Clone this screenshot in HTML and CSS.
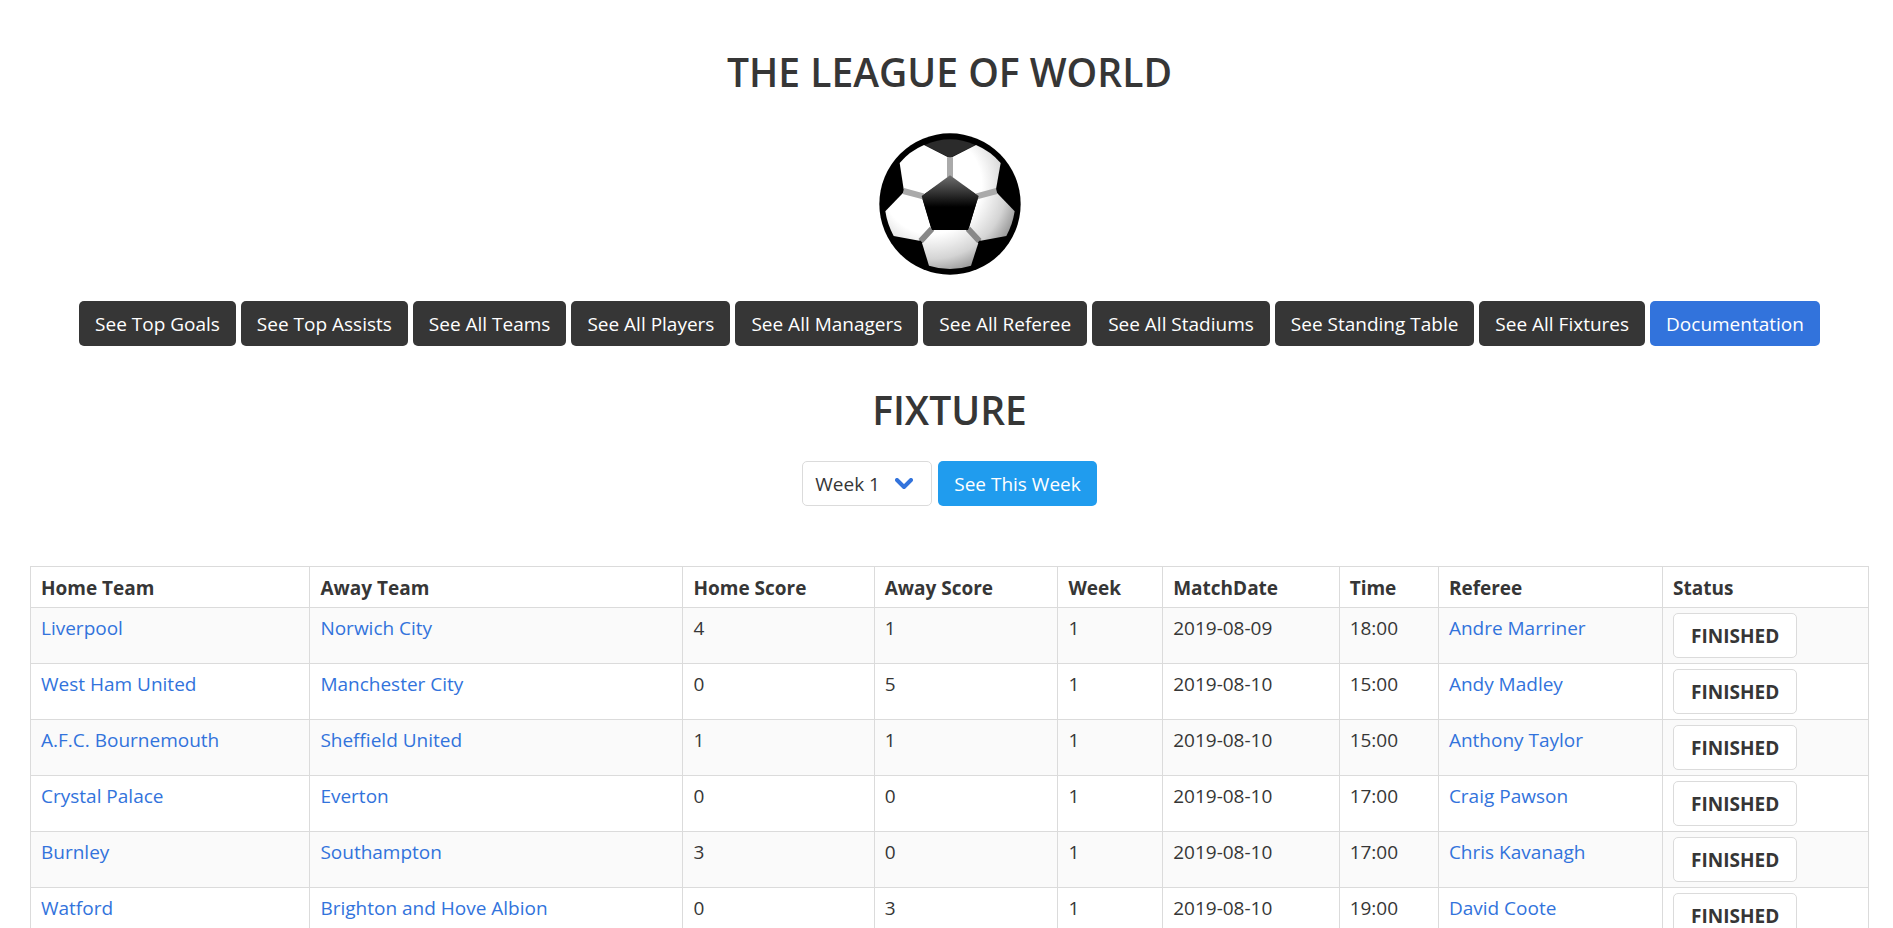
FILE: index.html
```html
<!DOCTYPE html>
<html lang="en">
<head>
<meta charset="utf-8">
<title>The League of World</title>
<link rel="stylesheet" href="styles.css">
</head>
<body>
<header class="header">
  <h1 class="title">THE LEAGUE OF WORLD</h1>
  <svg class="ball" viewBox="57 38 426 424" role="img" aria-label="Football">
    <defs>
      <linearGradient id="core" x1="0" y1="0" x2="0" y2="1"><stop offset="0" stop-color="#707070"/><stop offset="0.58" stop-color="#000"/></linearGradient>
      <radialGradient id="shade" gradientUnits="userSpaceOnUse" cx="215" cy="190" r="300"><stop offset="0.5" stop-color="#fff"/><stop offset="0.75" stop-color="#d4d4d4"/><stop offset="1" stop-color="#777"/></radialGradient>
    </defs>
    <circle cx="270" cy="250" r="212" fill="#000"/>
    <path d="M194 73Q270 38 346 73L270 111Z" fill="#2b2b2b"/>
    <g fill="url(#shade)">
      <path d="M192 73L270 113V168L185 226L131 206L119 127Q149 91 192 73Z"/>
      <path d="M348 73L270 113V168L355 226L408 206L422 127Q391 91 348 73Z"/>
      <path d="M131 215L185 227L214 325L178 360L101 346Q82 311 76 272Z"/>
      <path d="M409 215L355 227L326 325L362 360L439 346Q458 311 464 272Z"/>
      <path d="M221 328H319L355 367L333 435Q270 455 207 435L186 367Z"/>
    </g>
    <g stroke-width="18" fill="none">
      <path d="M270 110V170M130 211L190 227M410 211L350 227" stroke="#aaa"/>
      <path d="M216 324L182 361M324 324L358 361" stroke="#888"/>
    </g>
    <path d="M270 164L356 226L324 328H216L185 226Z" fill="url(#core)"/>
  </svg>
  <nav class="nav">
    <a class="button dark" href="#">See Top Goals</a>
    <a class="button dark" href="#">See Top Assists</a>
    <a class="button dark" href="#">See All Teams</a>
    <a class="button dark" href="#">See All Players</a>
    <a class="button dark" href="#">See All Managers</a>
    <a class="button dark" href="#">See All Referee</a>
    <a class="button dark" href="#">See All Stadiums</a>
    <a class="button dark" href="#">See Standing Table</a>
    <a class="button dark" href="#">See All Fixtures</a>
    <a class="button link" href="#">Documentation</a>
  </nav>
</header>
<main class="main">
  <h2 class="title">FIXTURE</h2>
  <form class="filter">
    <div class="select">
      <select aria-label="Week"><option>Week 1</option><option>Week 2</option><option>Week 3</option></select>
      <svg class="chevron" viewBox="0 0 18 12" aria-hidden="true"><path d="M2 2L9 9L16 2"/></svg>
    </div>
    <button class="button info" type="button">See This Week</button>
  </form>
  <table class="table">
    <colgroup><col class="c-home"><col class="c-away"><col class="c-hs"><col class="c-as"><col class="c-week"><col class="c-date"><col class="c-time"><col class="c-ref"><col class="c-status"></colgroup>
    <thead>
      <tr><th>Home Team</th><th>Away Team</th><th>Home Score</th><th>Away Score</th><th>Week</th><th>MatchDate</th><th>Time</th><th>Referee</th><th>Status</th></tr>
    </thead>
    <tbody>
      <tr><td><a href="#">Liverpool</a></td><td><a href="#">Norwich City</a></td><td>4</td><td>1</td><td>1</td><td>2019-08-09</td><td>18:00</td><td><a href="#">Andre Marriner</a></td><td><button class="button status" type="button">FINISHED</button></td></tr>
      <tr><td><a href="#">West Ham United</a></td><td><a href="#">Manchester City</a></td><td>0</td><td>5</td><td>1</td><td>2019-08-10</td><td>15:00</td><td><a href="#">Andy Madley</a></td><td><button class="button status" type="button">FINISHED</button></td></tr>
      <tr><td><a href="#">A.F.C. Bournemouth</a></td><td><a href="#">Sheffield United</a></td><td>1</td><td>1</td><td>1</td><td>2019-08-10</td><td>15:00</td><td><a href="#">Anthony Taylor</a></td><td><button class="button status" type="button">FINISHED</button></td></tr>
      <tr><td><a href="#">Crystal Palace</a></td><td><a href="#">Everton</a></td><td>0</td><td>0</td><td>1</td><td>2019-08-10</td><td>17:00</td><td><a href="#">Craig Pawson</a></td><td><button class="button status" type="button">FINISHED</button></td></tr>
      <tr><td><a href="#">Burnley</a></td><td><a href="#">Southampton</a></td><td>3</td><td>0</td><td>1</td><td>2019-08-10</td><td>17:00</td><td><a href="#">Chris Kavanagh</a></td><td><button class="button status" type="button">FINISHED</button></td></tr>
      <tr><td><a href="#">Watford</a></td><td><a href="#">Brighton and Hove Albion</a></td><td>0</td><td>3</td><td>1</td><td>2019-08-10</td><td>19:00</td><td><a href="#">David Coote</a></td><td><button class="button status" type="button">FINISHED</button></td></tr>
    </tbody>
  </table>
</main>
</body>
</html>
```
FILE: styles.css
```css
* { box-sizing: border-box; }
body {
  margin: 0;
  padding: 48px 24px 0 30px;
  background: #fff;
  color: #363636;
  font: 19px/30px "Open Sans", "Noto Sans", sans-serif;
}
a { color: #3273dc; text-decoration: none; }
.header, .main { display: flex; flex-direction: column; align-items: center; }
.title { margin: 0; font-size: 39px; line-height: 48px; font-weight: 600; }
.ball { width: 142px; height: 142px; margin: 37px 0 26px; }
.nav { display: flex; flex-wrap: wrap; justify-content: center; gap: 5px; }
.button {
  display: inline-flex;
  align-items: center;
  justify-content: center;
  height: 45px;
  padding: 1px 15px 0;
  border: 1px solid transparent;
  border-radius: 5px;
  font: inherit;
  white-space: nowrap;
}
.dark { background: #363636; color: #fff; }
.link { background: #3273dc; color: #fff; }
.info { background: #209cee; color: #fff; }
.status { display: flex; padding: 1px 17px 0; background: #fff; border-color: #dbdbdb; color: #363636; font-weight: 700; }
.main { padding-top: 40px; }
.filter { display: flex; gap: 6px; margin: 27px 0 60px; }
.select { position: relative; }
.select select {
  appearance: none;
  width: 130px;
  height: 45px;
  padding: 1px 40px 0 12px;
  border: 1px solid #dbdbdb;
  border-radius: 5px;
  background: #fff;
  color: #363636;
  font: inherit;
}
.chevron {
  position: absolute;
  top: 17px;
  right: 19px;
  width: 18px;
  height: 12px;
  fill: none;
  stroke: #3273dc;
  stroke-width: 4;
  stroke-linecap: round;
  stroke-linejoin: round;
  pointer-events: none;
}
.table { width: 100%; table-layout: fixed; border-collapse: collapse; }
.table th, .table td { border: 1px solid #dbdbdb; padding: 5px 10px; text-align: left; vertical-align: top; white-space: nowrap; }
.table th { padding: 6px 10px 4px; font-weight: 700; }
.table tbody tr:nth-child(odd) { background: #fafafa; }
.c-home { width: 15.2%; }
.c-away { width: 20.3%; }
.c-hs { width: 10.4%; }
.c-as { width: 10%; }
.c-week { width: 5.7%; }
.c-date { width: 9.6%; }
.c-time { width: 5.4%; }
.c-ref { width: 12.2%; }
.c-status { width: 11.2%; }
```
